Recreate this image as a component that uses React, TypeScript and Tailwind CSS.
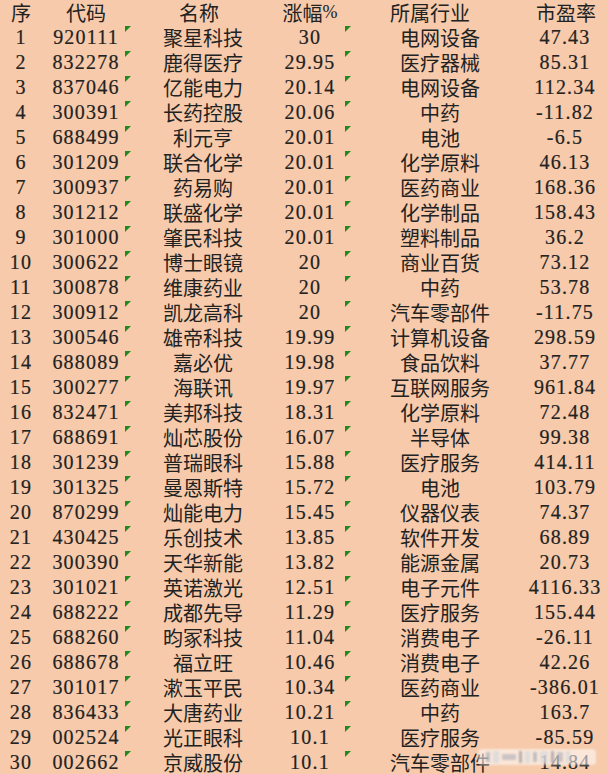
const rows: [string, string, string, string, string][] = [
  ["920111", "聚星科技", "30", "电网设备", "47.43"],
  ["832278", "鹿得医疗", "29.95", "医疗器械", "85.31"],
  ["837046", "亿能电力", "20.14", "电网设备", "112.34"],
  ["300391", "长药控股", "20.06", "中药", "-11.82"],
  ["688499", "利元亨", "20.01", "电池", "-6.5"],
  ["301209", "联合化学", "20.01", "化学原料", "46.13"],
  ["300937", "药易购", "20.01", "医药商业", "168.36"],
  ["301212", "联盛化学", "20.01", "化学制品", "158.43"],
  ["301000", "肇民科技", "20.01", "塑料制品", "36.2"],
  ["300622", "博士眼镜", "20", "商业百货", "73.12"],
  ["300878", "维康药业", "20", "中药", "53.78"],
  ["300912", "凯龙高科", "20", "汽车零部件", "-11.75"],
  ["300546", "雄帝科技", "19.99", "计算机设备", "298.59"],
  ["688089", "嘉必优", "19.98", "食品饮料", "37.77"],
  ["300277", "海联讯", "19.97", "互联网服务", "961.84"],
  ["832471", "美邦科技", "18.31", "化学原料", "72.48"],
  ["688691", "灿芯股份", "16.07", "半导体", "99.38"],
  ["301239", "普瑞眼科", "15.88", "医疗服务", "414.11"],
  ["301325", "曼恩斯特", "15.72", "电池", "103.79"],
  ["870299", "灿能电力", "15.45", "仪器仪表", "74.37"],
  ["430425", "乐创技术", "13.85", "软件开发", "68.89"],
  ["300390", "天华新能", "13.82", "能源金属", "20.73"],
  ["301021", "英诺激光", "12.51", "电子元件", "4116.33"],
  ["688222", "成都先导", "11.29", "医疗服务", "155.44"],
  ["688260", "昀冢科技", "11.04", "消费电子", "-26.11"],
  ["688678", "福立旺", "10.46", "消费电子", "42.26"],
  ["301017", "漱玉平民", "10.34", "医药商业", "-386.01"],
  ["836433", "大唐药业", "10.21", "中药", "163.7"],
  ["002524", "光正眼科", "10.1", "医疗服务", "-85.59"],
  ["002662", "京威股份", "10.1", "汽车零部件", "14.84"],
];

// digits look like SimSun half-width figures: serif, slightly spread
const num = "font-['Liberation_Serif','Noto_Sans_CJK_SC',serif] text-[20px] tracking-[1.2px] [-webkit-text-stroke:0.2px_#222]";
const cjk = "font-['Noto_Sans_CJK_SC',sans-serif] text-[20px]";

function Flag({ left }: { left: string }) {
  return (
    <svg className={`absolute top-[1px] ${left}`} width="6" height="6" viewBox="0 0 6 6">
      <polygon points="0,0 6,0 0,6" fill="#1f8a1f" />
    </svg>
  );
}

export default function App() {
  return (
    <div className="relative w-[608px] h-[774px] overflow-hidden bg-[#f6caab] text-[#222]">
      <div className="flex h-[25px] items-center leading-[25px]">
        <div className={`flex w-[42px] justify-center ${cjk}`}>序</div>
        <div className={`flex w-[88px] justify-center ${cjk}`}>代码</div>
        <div className={`flex w-[146px] justify-center pr-2 ${cjk}`}>名称</div>
        <div className={`flex w-[68px] justify-center ${cjk}`}>
          涨幅<span className="font-['Liberation_Serif'] text-[18px]">%</span>
        </div>
        <div className={`flex w-[192px] justify-center pr-5 ${cjk}`}>所属行业</div>
        <div className={`flex w-[72px] justify-center pr-3 ${cjk}`}>市盈率</div>
      </div>
      {rows.map((r, i) => (
        <div key={i} className="relative flex h-[25px] items-center leading-[25px]">
          <Flag left="left-[125px]" />
          <Flag left="left-[345px]" />
          <div className={`flex w-[42px] justify-center ${num}`}>{i + 1}</div>
          <div className={`flex w-[88px] justify-center ${num}`}>{r[0]}</div>
          <div className={`flex w-[146px] justify-center ${cjk}`}>{r[1]}</div>
          <div className={`flex w-[68px] justify-center ${num}`}>{r[2]}</div>
          <div className={`flex w-[192px] justify-center ${cjk}`}>{r[3]}</div>
          <div className={`flex w-[72px] justify-center pr-[14px] whitespace-nowrap ${num}`}>{r[4]}</div>
        </div>
      ))}
      <div className="absolute left-[478px] top-[749px] flex h-[16px] w-[118px] items-center gap-[3px] rounded-sm bg-white/55 px-2 blur-[1px]">
        <div className="h-[10px] w-[4px] bg-gray-400/60" />
        <div className="h-[12px] w-[6px] bg-gray-300/70" />
        <div className="h-[6px] w-[14px] bg-gray-400/50" />
        <div className="h-[12px] w-[3px] bg-gray-500/50" />
        <div className="h-[12px] w-[5px] bg-gray-300/70" />
        <div className="h-[10px] w-[4px] bg-gray-400/60" />
        <div className="h-[12px] w-[8px] bg-gray-300/60" />
        <div className="h-[12px] w-[3px] bg-gray-500/50" />
        <div className="h-[10px] w-[6px] bg-gray-400/50" />
        <div className="h-[12px] w-[4px] bg-gray-300/70" />
      </div>
    </div>
  );
}
